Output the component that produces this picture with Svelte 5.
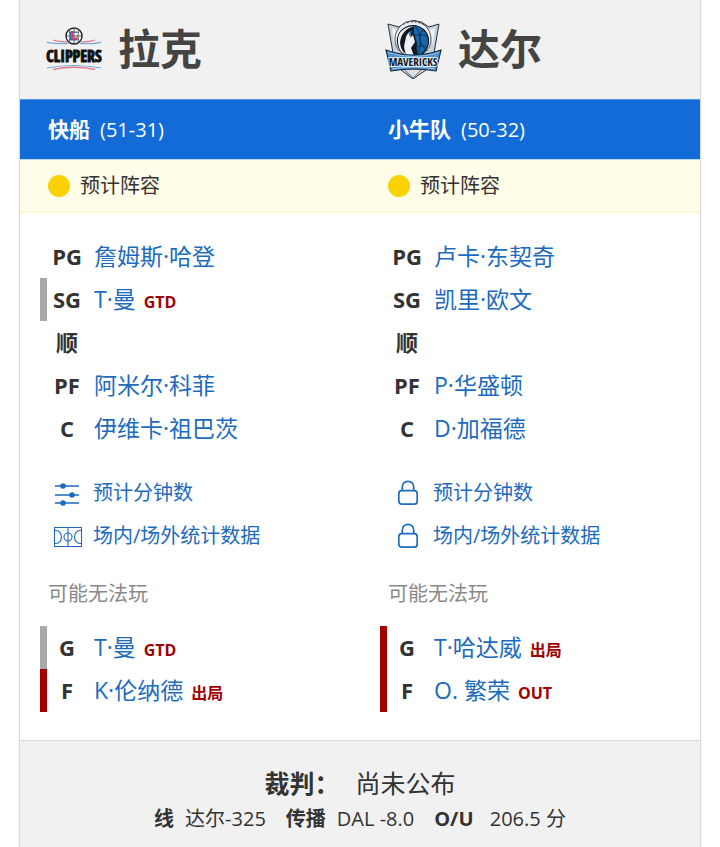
<script>
  const teams = [
    {
      id: 'lac',
      city: '拉克',
      name: '快船',
      record: '51-31',
      locked: false,
      starters: [
        { pos: 'PG', name: '詹姆斯·哈登' },
        { pos: 'SG', name: 'T·曼', tag: 'GTD', status: 'gtd' },
        { pos: '顺', name: '' },
        { pos: 'PF', name: '阿米尔·科菲' },
        { pos: 'C', name: '伊维卡·祖巴茨' },
      ],
      injured: [
        { pos: 'G', name: 'T·曼', tag: 'GTD', status: 'gtd' },
        { pos: 'F', name: 'K·伦纳德', tag: '出局', status: 'out' },
      ],
    },
    {
      id: 'dal',
      city: '达尔',
      name: '小牛队',
      record: '50-32',
      locked: true,
      starters: [
        { pos: 'PG', name: '卢卡·东契奇' },
        { pos: 'SG', name: '凯里·欧文' },
        { pos: '顺', name: '' },
        { pos: 'PF', name: 'P·华盛顿' },
        { pos: 'C', name: 'D·加福德' },
      ],
      injured: [
        { pos: 'G', name: 'T·哈达威', tag: '出局', status: 'out' },
        { pos: 'F', name: 'O. 繁荣', tag: 'OUT', status: 'out' },
      ],
    },
  ];

  const odds = [
    { label: '线', value: '达尔-325' },
    { label: '传播', value: 'DAL -8.0' },
    { label: 'O/U\u00a0', value: '206.5 分' },
  ];
</script>

{#snippet players(list)}
  <ul class="players">
    {#each list as p}
      <li class={['player', p.status]}>
        <span class="pos">{p.pos}</span>
        {#if p.name}
          <a class="name" href="#player">{p.name}</a>
        {/if}
        {#if p.tag}
          <span class="tag">{p.tag}</span>
        {/if}
      </li>
    {/each}
  </ul>
{/snippet}

{#snippet lock()}
  <svg width="30" height="30" viewBox="0 0 30 30" fill="none" stroke="currentColor" stroke-width="1.7">
    <rect x="5.8" y="12.6" width="18.4" height="13.6" rx="3" />
    <path d="M9.3 12.4V9a5.7 5.7 0 0 1 11.4 0v3.4" />
  </svg>
{/snippet}

<article class="card">
  <header class="cities">
    {#each teams as team}
      <div class="city">
        {#if team.id === 'lac'}
          <svg width="60" height="60" viewBox="0 0 60 60" role="img" aria-label="Clippers">
            <circle cx="30" cy="17" r="8" fill="#fff" stroke="#222" stroke-width="1.4" />
            <path d="M30 9v16M22 17h16M25 11q2.5 6 0 12M35 11q-2.5 6 0 12" fill="none" stroke="#333" stroke-width=".8" />
            <path d="M33.5 13.2h-7v7.6h7" fill="none" stroke="#2c6eb5" stroke-width="1.5" />
            <path d="M28.2 12v7.5h5.6" fill="none" stroke="#e03a5a" stroke-width="2.2" />
            <path d="M9 21q7 2.5 14 1.6M51 21q-7 2.5-14 1.6M9 50.5q21-4.5 42 0" fill="none" stroke="#e57b91" stroke-width="1.3" />
            <path d="M3 23.4q10 2 21 1M57 23.4q-10 2-21 1M3 49q27-5 54 0" fill="none" stroke="#6ea6d8" stroke-width="1.2" />
            <text class="clippers" x="30" y="43" text-anchor="middle">CLIPPERS</text>
          </svg>
        {:else}
          <svg width="60" height="60" viewBox="0 0 60 60" role="img" aria-label="Mavericks">
            <path d="M4 5l11 3q15-13 30 0l10-3-5 29-8 17-13 9-12-9-8-17z" fill="#c9d1d8" stroke="#27313b" stroke-width="1" />
            <path d="M8 9l7 2-5 15zM51 9l-7 2 5 15z" fill="#edf0f2" />
            <circle cx="29" cy="20" r="18" fill="#eef1f3" stroke="#27313b" stroke-width=".8" />
            <path d="M19 5.2q10-5 20 0" fill="none" stroke="#53606d" stroke-width="1.5" stroke-dasharray="2 2" />
            <circle cx="29" cy="22" r="15.5" fill="#1569b0" stroke="#10161c" stroke-width="1.2" />
            <path d="M31 7q10 11 2 30M30 17q8-3 14 1M31 28q7-3 12 0M39 10q-8 11 4 22" fill="none" stroke="#10253a" stroke-width=".8" />
            <path d="M30 7q-5 4-5 10l4-3 3 8-3 6 2 9q-16 1-17-14Q13 9 30 7z" fill="#eef1f3" />
            <path d="M30 7q-13 4-14 17 1 8 6 11-3-7-1-12 1-9 7-12l-2 8 3-3 2 7-4 6 3 8 4-1q-2-7-1-12l-3-10z" fill="#111820" />
            <path d="M24 17l2 2-2 8-2 4" fill="none" stroke="#f4f6f8" stroke-width="1.4" />
            <path d="M20 50l9 9 9-9z" fill="#dce1e6" stroke="#53606d" stroke-width=".8" />
            <path d="M2 31q27 10 55 0l-5 21q-22-4-45 0z" fill="#4c92cf" stroke="#14283b" stroke-width="1.1" />
            <path d="M4 33.5q26 8 51 0M8 50q22-4 43 0" fill="none" stroke="#a9cdec" stroke-width=".8" />
            <text class="mavericks" x="29" y="47" text-anchor="middle">MAVERICKS</text>
          </svg>
        {/if}
        <h1>{team.city}</h1>
      </div>
    {/each}
  </header>

  <div class="bar">
    {#each teams as team}
      <div class="team"><strong>{team.name}</strong><span>({team.record})</span></div>
    {/each}
  </div>

  <div class="lineup-status">
    {#each teams as team}
      <div class="expected"><i class="dot"></i>预计阵容</div>
    {/each}
  </div>

  <div class="lineups">
    {#each teams as team}
      <section class="lineup">
        {@render players(team.starters)}

        <nav class="links">
          <a href="#minutes">
            {#if team.locked}
              {@render lock()}
            {:else}
              <svg width="30" height="30" viewBox="0 0 30 30" fill="currentColor" stroke="currentColor" stroke-width="1.6">
                <path d="M2 8h24M2 17h24M2 25h24" />
                <circle cx="10" cy="8" r="2" />
                <circle cx="19" cy="17" r="2" />
                <circle cx="10" cy="25" r="2" />
              </svg>
            {/if}
            预计分钟数
          </a>
          <a href="#on-off">
            {#if team.locked}
              {@render lock()}
            {:else}
              <svg width="30" height="30" viewBox="0 0 30 30" fill="none" stroke="currentColor" stroke-width="1.1">
                <path d="M1.5 6.5h27v19h-27zM15 6.5v19" />
                <circle cx="15" cy="16" r="4" />
                <path d="M1.5 9.5H3a5.5 6.500 0 0 1 0 13H1.500M28.500 9.500H27a5.500 6.500 0 0 0 0 13h1.500" />
              </svg>
            {/if}
            场内/场外统计数据
          </a>
        </nav>

        <h2>可能无法玩</h2>
        {@render players(team.injured)}
      </section>
    {/each}
  </div>

  <footer>
    <p class="referee"><strong>裁判：</strong><span>尚未公布</span></p>
    <dl class="odds">
      {#each odds as o}
        <div><dt>{o.label}</dt><dd>{o.value}</dd></div>
      {/each}
    </dl>
  </footer>
</article>

<style>
  :global(body) {
    margin: 0;
    background: #fff;
  }

  .card {
    margin: 0 19px;
    border: 1px solid #d9d9d9;
    border-width: 0 1px;
    box-shadow: 0 0 2px rgba(0, 0, 0, 0.1);
    font-family: 'Open Sans', 'Noto Sans CJK SC', sans-serif;
    font-size: 20px;
    line-height: 28px;
    color: #333;
  }

  .cities,
  .bar,
  .lineup-status,
  .lineups {
    display: grid;
    grid-template-columns: 1fr 1fr;
  }

  .cities {
    padding: 19px 0 20px;
    background: #f1f1f1;
  }

  .city {
    display: flex;
    align-items: center;
    gap: 14px;
    padding-left: 24px;
  }

  h1 {
    margin: 0;
    font-size: 42px;
    line-height: 60px;
    font-weight: 700;
    color: #444;
  }

  .clippers,
  .mavericks {
    font-family: 'Open Sans Condensed', 'Roboto Condensed', 'Noto Sans Condensed', 'Liberation Sans', sans-serif;
    font-weight: 700;
  }

  .clippers {
    font-size: 16px;
    fill: #111;
    stroke: #111;
    stroke-width: 1px;
  }

  .mavericks {
    font-size: 11px;
    fill: #0c1620;
    stroke: #e4edf5;
    stroke-width: 2px;
    paint-order: stroke;
  }

  .bar {
    padding: 15px 0;
    border-top: 1px solid #4a9be8;
    background: #126bd6;
    color: #fff;
  }

  .team {
    display: flex;
    align-items: baseline;
    gap: 10px;
    padding-left: 28px;
  }

  .team strong {
    font-size: 21px;
    line-height: 28px;
  }

  .lineup-status {
    padding: 12px 0;
    border-top: 1px solid #b9dbee;
    border-bottom: 1px solid #fbf3c0;
    background: #fffce8;
  }

  .expected {
    display: flex;
    align-items: center;
    gap: 10px;
    padding-left: 28px;
  }

  .dot {
    width: 22px;
    height: 22px;
    border-radius: 50%;
    background: #fad105;
  }

  .lineups {
    padding: 22px 0 28px;
  }

  .players {
    margin: 0;
    padding: 0 0 0 20px;
    list-style: none;
  }

  .player {
    display: flex;
    align-items: baseline;
    height: 43px;
    line-height: 43px;
    border-left: 7px solid transparent;
  }

  .player.gtd {
    border-color: #a9a9a9;
  }

  .player.out {
    border-color: #a00000;
  }

  .pos {
    width: 40px;
    margin-right: 7px;
    text-align: center;
    font-size: 22px;
    font-weight: 700;
  }

  .name {
    font-size: 23px;
  }

  .tag {
    margin-left: 8px;
    font-size: 16px;
    font-weight: 700;
    color: #a00000;
  }

  a {
    color: #1c6bbd;
    text-decoration: none;
  }

  .links {
    display: flex;
    flex-direction: column;
    padding: 21px 0 23px 33px;
  }

  .links a {
    display: flex;
    align-items: center;
    gap: 10px;
    height: 43px;
  }

  h2 {
    margin: 0 0 18px;
    padding-left: 28px;
    font-size: 20px;
    font-weight: 400;
    color: #888;
  }

  footer {
    padding: 23px 0 14px;
    border-top: 1px solid #d9d9d9;
    background: #f1f1f1;
    text-align: center;
  }

  .referee {
    display: flex;
    justify-content: center;
    gap: 16px;
    margin: 0 0 3px;
    font-size: 25px;
    line-height: 38px;
  }

  .odds {
    display: flex;
    flex-wrap: wrap;
    justify-content: center;
    gap: 20px;
    margin: 0;
  }

  .odds div {
    display: flex;
    gap: 11px;
  }

  dt {
    font-weight: 700;
  }

  dd {
    margin: 0;
  }
</style>
